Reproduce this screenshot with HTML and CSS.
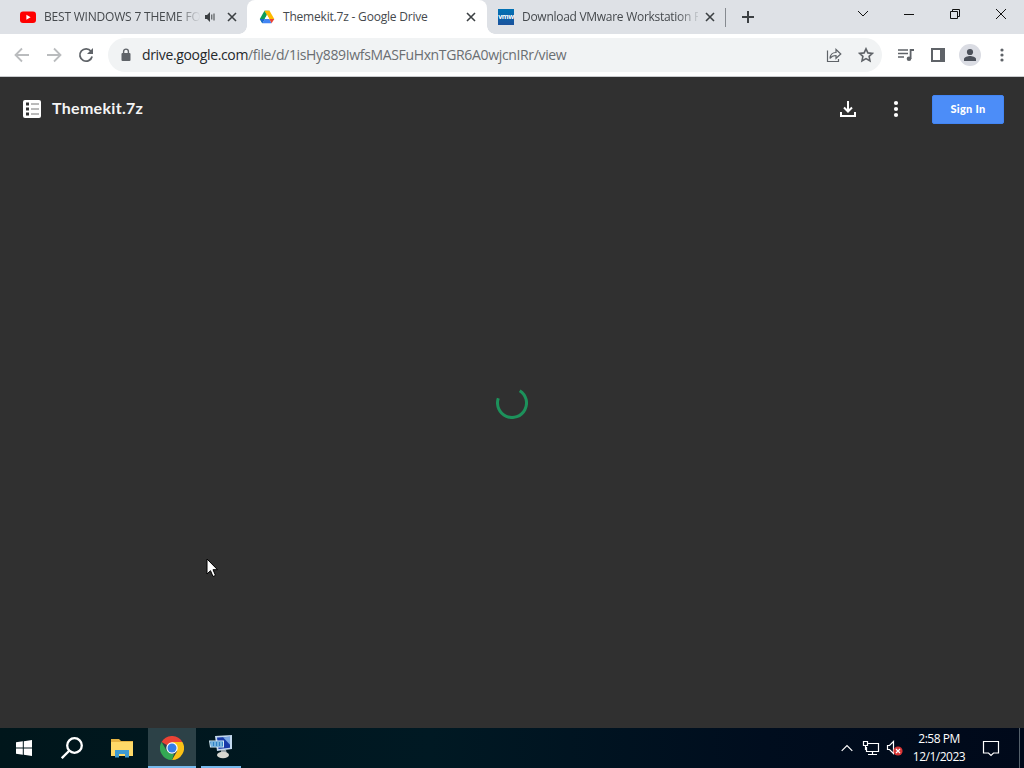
FILE: index.html
```
<!DOCTYPE html>
<html lang="en">
<head>
    <meta charset="UTF-8">
    <meta name="viewport" content="width=device-width, initial-scale=1.0">
    <title>Themekit.7z - Google Drive</title>
    <link rel="stylesheet" href="styles.css">
</head>
<body>
    <div class="desktop">
        <div class="tab-strip">
            <div class="tab tab-first">
                <svg class="favicon" viewBox="0 0 16 16"><rect y="2.5" width="16" height="11.5" rx="3" fill="#f00"/><path d="M6.4 5.8v5l4.2-2.5z" fill="#fff"/></svg>
                <span class="tab-title title-youtube fade">BEST WINDOWS 7 THEME FO</span>
                <svg class="sound" viewBox="0 0 12 12"><path d="M1 4h2l3-3v10L3 8H1z" fill="#3c4043"/><path d="M7.8 3.5v5M10 2.5v7" stroke="#3c4043" fill="none"/></svg>
                <svg class="close" viewBox="0 0 10 10"><path d="M1 1l8 8M9 1L1 9"/></svg>
            </div>
            <div class="tab tab-active">
                <svg class="favicon" viewBox="0 0 16 16"><path d="M5.5 1.7h5L8 6z" fill="#188038"/><path d="M5.5 1.7L.8 10l2.4 4.3L8 6z" fill="#0f9d58"/><path d="M10.5 1.7L15.3 10h-5L5.5 1.7z" fill="#ffba00"/><path d="M.8 10h5l-2.4 4.3z" fill="#1967d2"/><path d="M5.8 10h4.5l2.3 4.3H3.4z" fill="#4285f4"/><path d="M10.3 10h5l-2.7 4.3z" fill="#ea4335"/><path d="M8 6l2.3 4H5.8z" fill="#fff"/></svg>
                <span class="tab-title title-drive">Themekit.7z - Google Drive</span>
                <svg class="close" viewBox="0 0 10 10"><path d="M1 1l8 8M9 1L1 9"/></svg>
            </div>
            <div class="tab tab-last">
                <span class="vmw">vmw</span>
                <span class="tab-title title-vmware fade">Download VMware Workstation P</span>
                <svg class="close" viewBox="0 0 10 10"><path d="M1 1l8 8M9 1L1 9"/></svg>
            </div>
            <svg class="new-tab" viewBox="0 0 12 12"><path d="M6 0v12M0 6h12"/></svg>
            <div class="window-controls">
                <svg viewBox="0 0 12 12"><path d="M1 3l5 5 5-5"/></svg>
                <svg viewBox="0 0 12 12"><path d="M1 6.5h10"/></svg>
                <svg viewBox="0 0 12 12"><path d="M1.5 3.5h7v7h-7zM3.5 3V1.5h7v7H9"/></svg>
                <svg viewBox="0 0 12 12"><path d="M1 1l10 10M11 1L1 11"/></svg>
            </div>
        </div>

        <div class="toolbar">
            <svg class="nav disabled" viewBox="0 0 16 16"><path d="M15 8H2M8 1.5L1.5 8 8 14.5"/></svg>
            <svg class="nav disabled" viewBox="0 0 16 16"><path d="M1 8h13M8 1.5L14.5 8 8 14.5"/></svg>
            <svg class="nav" viewBox="0 0 16 16"><path d="M13 4.2A6.200 6.200 0 1 0 14.100 9.500"/><path d="M15 1v6H9z" class="solid"/></svg>
            <div class="omnibox">
                <svg class="lock" viewBox="0 0 10 14"><rect x=".5" y="5" width="9" height="8" rx="1" fill="#5f6368"/><path d="M2.6 5V3.5a2.4 2.4 0 0 1 4.8 0V5" fill="none" stroke="#5f6368" stroke-width="1.4"/></svg>
                <div class="url"><span>drive.google.com</span>/file/d/1isHy889IwfsMASFuHxnTGR6A0wjcnIRr/view</div>
                <svg class="share" viewBox="0 0 16 16"><path d="M1.5 3.5v11h11V12M4 11.500c.3-4 2.500-6 6-6V2.500l4.800 4.500-4.800 4.300V8.500c-3 0-4.700 1-6 3z"/></svg>
                <svg class="star" viewBox="0 0 16 16"><path d="M8 1.800l1.900 4.100 4.500.5-3.300 3 .9 4.500-4-2.300-4 2.300.9-4.500-3.300-3 4.500-.5z"/></svg>
            </div>
            <svg class="tool-icon" viewBox="0 0 16 16"><path d="M0 3h10M0 6.500h10M0 10h6" class="line"/><circle cx="11" cy="11.700" r="2.300"/><path d="M11.700 2H16v2h-2.500v8h-1.800z"/></svg>
            <svg class="tool-icon panel" viewBox="0 0 16 16"><path d="M1 1h14v14H1zM3 3v10h7V3z" fill-rule="evenodd"/></svg>
            <div class="avatar"><svg viewBox="0 0 14 14"><circle cx="7" cy="4" r="3.100"/><path d="M1 13v-2c0-2 4-3 6-3s6 1 6 3v2z"/></svg></div>
            <svg class="tool-icon dots" viewBox="0 0 16 16"><circle cx="8" cy="3" r="1.600"/><circle cx="8" cy="8" r="1.600"/><circle cx="8" cy="13" r="1.600"/></svg>
        </div>

        <main class="viewer">
            <header class="viewer-header">
                <svg class="file-icon" viewBox="0 0 18 18"><rect width="18" height="18" rx="2" fill="#fff"/><path d="M3 2.500h3v3H3zM3 7.500h3v3H3zM3 12.500h3v3H3z" fill="#303030"/><path d="M8 4h8M8 9h8M8 14h8" stroke="#777" stroke-width="1"/></svg>
                <h1>Themekit.7z</h1>
                <svg class="download" viewBox="0 0 18 18"><path d="M9 1v10M5 7.500L9 11.500 13 7.500M2 12v4h14v-4"/></svg>
                <svg class="more" viewBox="0 0 6 18"><circle cx="3" cy="3" r="2.100"/><circle cx="3" cy="9" r="2.100"/><circle cx="3" cy="15" r="2.100"/></svg>
                <button class="sign-in">Sign In</button>
            </header>
            <svg class="spinner" viewBox="0 0 32 32"><path d="M23.700 3.700A14.500 14.500 0 1 1 2.300 11.300"/></svg>
            <svg class="cursor" viewBox="0 0 12 20"><path d="M1 1v15l3.500-3.300L7 18.500l2.500-1.100L7 11.700h4.500z" fill="#fff" stroke="#000"/></svg>
        </main>

        <footer class="taskbar">
            <div class="task start"><svg viewBox="0 0 16 16"><path d="M0 2.300L6.800 1.300V7.500H0zM7.800 1.200L16 0v7.500H7.800zM0 8.500h6.800v6.200L0 13.700zM7.800 8.500H16V16l-8.200-1.200z" fill="#fff"/></svg></div>
            <div class="task find"><svg class="search" viewBox="0 0 22 22"><circle cx="13.500" cy="8.500" r="7.300"/><path d="M8.200 13.800L.8 21.200"/></svg></div>
            <div class="task files"><svg class="folder" viewBox="0 0 22 20"><path d="M0 1h8l2 2h12v15H0z" fill="#e7b443"/><path d="M0 4h22v14H0z" fill="#ffd968"/><path d="M4 19.500V12h14v7.500h-4V16H8v3.500z" fill="#3e9bd3"/></svg></div>
            <div class="task task-active"><svg class="chrome" viewBox="0 0 24 24"><path d="M12 12L1.600 6A12 12 0 0 1 22.400 6z" fill="#ea4335"/><path d="M12 6h10.400A12 12 0 0 1 12 24l5.200-9z" fill="#fbc116"/><path d="M1.600 6L6.800 15l5.200 3 2 0-2 6A12 12 0 0 1 1.600 6z" fill="#34a853"/><circle cx="12" cy="12" r="5.700" fill="#fff"/><circle cx="12" cy="12" r="4.500" fill="#357de8"/></svg></div>
            <div class="task task-open"><svg class="computer" viewBox="0 0 24 24"><path d="M6 1l17-1v14L8 16z" fill="#c3d8ed"/><path d="M8 2.500l13-.8v11L9.500 14z" fill="#1739a8"/><path d="M14 2.200l7-.5v8z" fill="#7ba8e4"/><path d="M0 5.500h15v7H1z" fill="#d7edf8"/><path d="M1 6.500h13v5H2z" fill="#3182c4"/><path d="M2 8h11M2 10h11" stroke="#b6e1f7" stroke-dasharray="2 1"/><path d="M12 15h5l1 4h-6z" fill="#99a3a9"/><ellipse cx="14" cy="20" rx="6" ry="3.200" fill="#d8d8d1"/></svg></div>
            <div class="tray">
                <svg class="chevron" viewBox="0 0 12 8"><path d="M.7 6.800L6 1.500l5.300 5.300"/></svg>
                <svg class="network" viewBox="0 0 18 16"><path d="M6 3.500h10.500v8h-12V7M10.500 12v3M6 14.500h9M1.500 1.500h4v4h-4zM3.500 6v4"/></svg>
                <svg class="volume" viewBox="0 0 17 16"><path d="M1.500 5.500h2L7.500 1.500v12L3.500 9.500h-2z"/><circle cx="12" cy="11" r="4.600" fill="#d93636" stroke="none"/><path d="M10 9l4 4M14 9l-4 4"/></svg>
                <div class="clock"><span class="time">2:58 PM</span><span class="date">12/1/2023</span></div>
                <svg class="notice" viewBox="0 0 18 18"><path d="M1.500 2.500h15v11.500h-5L9 16.500 6.500 14h-5z"/></svg>
                <div class="show-desktop"></div>
            </div>
        </footer>
    </div>
</body>
</html>
```
FILE: styles.css
```
* {
    box-sizing: border-box;
}
body {
    margin: 0;
    font-family: "Open Sans", "Noto Sans", sans-serif;
    background: #303030;
}
svg {
    display: block;
    flex: none;
}
.desktop {
    width: 1024px;
    height: 768px;
    display: flex;
    flex-direction: column;
    overflow: hidden;
}

/* tabs */
.tab-strip {
    height: 34px;
    display: flex;
    align-items: center;
    background: #dee1e6;
    position: relative;
}
.tab {
    height: 34px;
    display: flex;
    align-items: center;
    position: relative;
}
.tab-first {
    width: 247px;
    padding: 0 10px 0 20px;
}
.tab-active {
    width: 240px;
    padding: 0 11px 0 12px;
    background: #fff;
    border-radius: 8px 8px 0 0;
}
.tab-active::before,
.tab-active::after {
    content: "";
    position: absolute;
    bottom: 0;
    width: 8px;
    height: 8px;
}
.tab-active::before {
    left: -8px;
    background: radial-gradient(circle at 0 0, transparent 7.5px, #fff 8px);
}
.tab-active::after {
    right: -8px;
    background: radial-gradient(circle at 100% 0, transparent 7.5px, #fff 8px);
}
.tab-last {
    width: 239px;
    padding: 0 11px;
}
.tab-last::after {
    content: "";
    position: absolute;
    right: 0;
    top: 8px;
    width: 1px;
    height: 19px;
    background: #868a90;
}
.favicon {
    width: 16px;
    height: 16px;
}
.vmw {
    width: 16px;
    height: 16px;
    background: linear-gradient(#0072b5, #1a529d);
    color: #fff;
    font: bold 7px/15px "Open Sans", sans-serif;
    letter-spacing: -0.5px;
    text-align: center;
}
.tab-title {
    flex: none;
    margin-left: 8px;
    font-size: 12px;
    line-height: 18px;
    letter-spacing: -0.2px;
    color: #45494d;
    white-space: nowrap;
}
.title-youtube {
    width: 158px;
}
.title-drive {
    width: 150px;
}
.title-vmware {
    width: 176px;
    letter-spacing: -0.28px;
}
.title-youtube.fade {
    -webkit-mask-image: linear-gradient(to right, #000 84%, transparent 99%);
    mask-image: linear-gradient(to right, #000 84%, transparent 99%);
}
.title-vmware.fade {
    -webkit-mask-image: linear-gradient(to right, #000 88%, transparent 102%);
    mask-image: linear-gradient(to right, #000 88%, transparent 102%);
}
.sound {
    width: 12px;
    height: 12px;
    margin-left: 2px;
}
.close {
    width: 10px;
    height: 10px;
    margin-left: auto;
    fill: none;
    stroke: #3c4043;
    stroke-width: 1.6;
}
.new-tab {
    width: 12px;
    height: 12px;
    margin-left: 16px;
    stroke: #3c4043;
    stroke-width: 2;
}
.window-controls {
    display: flex;
    gap: 34px;
    margin-left: auto;
    margin-right: 17px;
    padding-bottom: 6px;
}
.window-controls svg {
    width: 12px;
    height: 12px;
    fill: none;
    stroke: #111;
}

/* address bar */
.toolbar {
    height: 43px;
    display: flex;
    align-items: center;
    padding: 0 14px;
    background: #fff;
    border-bottom: 1px solid #c9cbce;
}
.nav {
    width: 16px;
    height: 16px;
    margin-right: 16px;
    fill: none;
    stroke: #5f6368;
    stroke-width: 1.8;
}
.nav .solid {
    fill: #5f6368;
    stroke: none;
}
.disabled {
    stroke: #babcbe;
}
.omnibox {
    width: 774px;
    height: 34px;
    display: flex;
    align-items: center;
    margin-left: -2px;
    padding: 0 8px 0 13px;
    border-radius: 17px;
    background: #f1f3f4;
}
.lock {
    width: 10px;
    height: 14px;
}
.url {
    flex: 1;
    margin-left: 11px;
    font-size: 14px;
    line-height: 20px;
    letter-spacing: -0.345px;
    color: #6a6e72;
    white-space: nowrap;
}
.url span {
    color: #25282b;
}
.share,
.star {
    width: 16px;
    height: 16px;
    fill: none;
    stroke: #5f6368;
    stroke-width: 1.2;
}
.star {
    margin-left: 16px;
    stroke-width: 1.6;
}
.tool-icon {
    width: 16px;
    height: 16px;
    margin-left: 16px;
    fill: #5f6368;
}
.line {
    stroke: #5f6368;
    stroke-width: 1.6;
}
.avatar {
    width: 22px;
    height: 22px;
    display: grid;
    place-items: center;
    margin-left: 13px;
    border-radius: 50%;
    background: #dadce3;
}
.avatar svg {
    width: 14px;
    height: 14px;
    fill: #4b505a;
}
.dots {
    margin-left: 13px;
}

/* file viewer */
.viewer {
    flex: 1;
    position: relative;
    background: #303030;
}
.viewer-header {
    height: 64px;
    display: flex;
    align-items: center;
    padding: 0 20px 0 23px;
}
.file-icon {
    width: 18px;
    height: 18px;
}
h1 {
    margin: 0 auto 2px 11px;
    font: 700 16px/24px Lato, sans-serif;
    letter-spacing: 0.3px;
    color: #f4f4f4;
}
.download {
    width: 18px;
    height: 18px;
    fill: none;
    stroke: #fff;
    stroke-width: 2;
}
.more {
    width: 6px;
    height: 18px;
    margin: 0 33px 0 36px;
    fill: #fff;
}
.sign-in {
    width: 72px;
    height: 29px;
    padding: 0;
    border: 1px solid #4285f4;
    border-radius: 2px;
    background: #4c8df8;
    color: #fff;
    font: 900 11px/16px Lato, sans-serif;
    letter-spacing: 0.25px;
}
.spinner {
    width: 32px;
    height: 32px;
    position: absolute;
    left: 496px;
    top: 310px;
    fill: none;
    stroke: #1d915b;
    stroke-width: 3;
}
.cursor {
    width: 12px;
    height: 20px;
    position: absolute;
    left: 206px;
    top: 481px;
}

/* taskbar */
.taskbar {
    height: 40px;
    display: flex;
    background: linear-gradient(to right, #00161b, #001923 42%, #000d1e 75%, #00091a);
}
.task {
    display: flex;
    align-items: center;
    justify-content: center;
}
.start,
.find {
    width: 48px;
}
.files {
    width: 52px;
}
.start svg {
    width: 16px;
    height: 16px;
}
.search {
    width: 22px;
    height: 22px;
    fill: none;
    stroke: #fff;
    stroke-width: 2.3;
}
.folder {
    width: 22px;
    height: 20px;
}
.task-active {
    width: 48px;
    background: #2c4147;
    border-bottom: 2px solid #76b9ed;
}
.chrome,
.computer {
    width: 24px;
    height: 24px;
    margin-top: 2px;
}
.computer {
    margin-top: 0;
}
.task-open {
    width: 40px;
    margin-left: 5px;
    border-bottom: 2px solid #76b9ed;
}
.tray {
    display: flex;
    align-items: center;
    margin-left: auto;
}
.tray svg {
    fill: none;
    stroke: #fff;
    stroke-width: 1.2;
}
.tray .chevron {
    width: 12px;
    height: 8px;
}
.tray .network {
    width: 18px;
    height: 16px;
    margin-left: 9px;
}
.tray .volume {
    width: 17px;
    height: 16px;
    margin-left: 6px;
}
.clock {
    width: 60px;
    display: flex;
    flex-direction: column;
    align-items: center;
    margin-left: 6px;
    font-size: 12px;
    line-height: 18px;
    letter-spacing: -0.5px;
    color: #fff;
    white-space: nowrap;
}
.tray .notice {
    width: 18px;
    height: 18px;
    margin-left: 13px;
}
.show-desktop {
    width: 5px;
    height: 40px;
    margin-left: 19px;
    border-left: 1px solid #55616b;
}
```
